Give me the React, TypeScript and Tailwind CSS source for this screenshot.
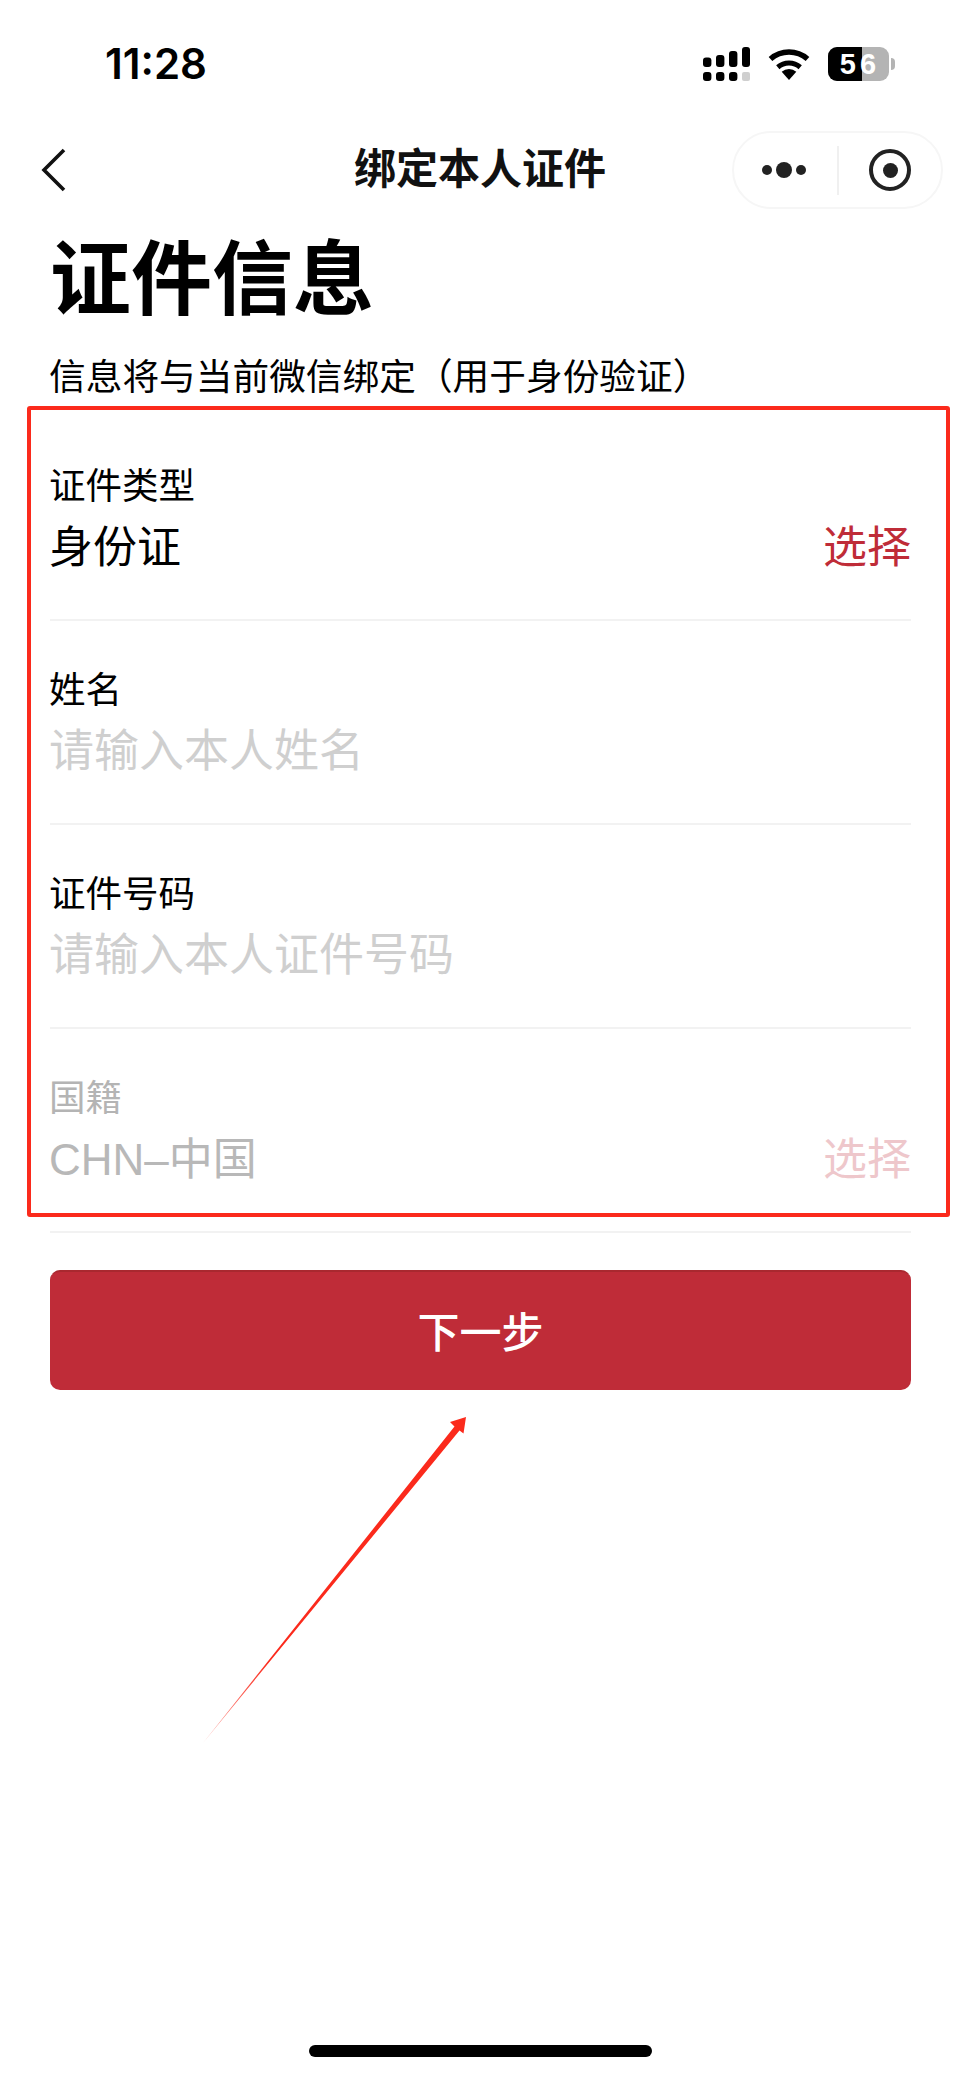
import React from "react";

const FONT = "font-['Liberation_Sans','Noto_Sans_CJK_SC',sans-serif]";

const SignalIcon = () => (
  <svg width="48" height="35" viewBox="0 0 48 35" fill="#000">
    <rect x="1" y="10.5" width="8.4" height="9.5" rx="3" />
    <rect x="14" y="8" width="8.4" height="12" rx="3" />
    <rect x="27" y="4" width="8.4" height="16" rx="3" />
    <rect x="40" y="0" width="8" height="20" rx="3" />
    <rect x="1" y="25" width="8.4" height="9" rx="3" />
    <rect x="14" y="25" width="8.4" height="9" rx="3" />
    <rect x="27" y="25" width="8.4" height="9" rx="3" />
    <rect x="40" y="25" width="8" height="9" rx="2" fill="#cfcfcf" />
  </svg>
);

const WifiIcon = () => (
  <svg width="42" height="31" viewBox="0 0 42 31" fill="none" stroke="#000">
    <path d="M2.5 10A28 28 0 0 1 39.5 10" strokeWidth="5.5" />
    <path d="M9.8 18.25A17 17 0 0 1 32.2 18.25" strokeWidth="5" />
    <path d="M21 31L13.7 22.7A11 11 0 0 1 28.3 22.7Z" fill="#000" stroke="none" />
  </svg>
);

const Battery = () => (
  <div className="flex items-center">
    <div className="relative flex h-[34px] w-[61px] overflow-hidden rounded-[9px] bg-[#b4b4b4]">
      <div className="h-full w-[34px] bg-black" />
      <span className="absolute inset-0 flex items-center justify-center pl-[3px] text-[29px] font-bold leading-none tracking-[4px] text-white">
        56
      </span>
    </div>
    <div className="ml-[2px] h-[12px] w-[4px] rounded-r-full bg-[#b4b4b4]" />
  </div>
);

const Row = ({
  label,
  value,
  action,
  placeholder,
  muted,
}: {
  label: string;
  value?: string;
  action?: string;
  placeholder?: string;
  muted?: boolean;
}) => (
  <div className="h-[204px] border-b-2 border-[#f2f2f2] pt-[45px]">
    <div className={`-ml-[1px] text-[36.5px] leading-[50px] ${muted ? "text-[#b4b4b4]" : "text-black"}`}>{label}</div>
    <div className="mt-[6px] flex items-center justify-between text-[44px] leading-[60px]">
      {placeholder ? (
        <span className="-ml-[1px] text-[45px] text-[#cfcfcf]">{placeholder}</span>
      ) : (
        <span className={`-ml-[1px] ${muted ? "text-[#b8b8b8]" : "text-black"}`}>{value}</span>
      )}
      {action && <span className={muted ? "text-[#eec7cb]" : "text-[#bf2c38]"}>{action}</span>}
    </div>
  </div>
);

export default function App() {
  return (
    <div className={`relative flex h-[2077px] w-[960px] flex-col overflow-hidden bg-white ${FONT}`}>
      {/* status bar */}
      <div className="flex h-[131px] items-center justify-between pb-[3px] pl-[105px] pr-[65px]">
        <span className="font-['Inter'] text-[42px] font-semibold leading-none text-black">11:28</span>
        <div className="flex items-center gap-[18px]">
          <SignalIcon />
          <WifiIcon />
          <Battery />
        </div>
      </div>

      {/* nav bar */}
      <div className="relative flex h-[78px] items-center justify-center">
        <svg className="absolute left-[40px] top-[17px]" width="28" height="44" viewBox="0 0 28 44" fill="none">
          <path d="M24 2L4 22L24 42" stroke="#111" strokeWidth="3.6" />
        </svg>
        <span className="text-[42px] font-semibold leading-none text-[#111]">绑定本人证件</span>
        <div className="absolute right-[17px] top-0 flex h-[78px] w-[211px] items-center rounded-full border-2 border-[#f6f6f6] bg-white">
          <div className="flex w-[103px] items-center justify-center gap-[4px] pr-[3px]">
            <span className="h-[10px] w-[10px] rounded-full bg-[#222]" />
            <span className="h-[16px] w-[16px] rounded-full bg-[#222]" />
            <span className="h-[10px] w-[10px] rounded-full bg-[#222]" />
          </div>
          <div className="h-[49px] w-[2px] bg-[#f0f0f0]" />
          <div className="flex flex-1 items-center justify-center">
            <div className="flex h-[42px] w-[42px] items-center justify-center rounded-full border-[4px] border-[#222]">
              <span className="h-[15px] w-[15px] rounded-full bg-[#222]" />
            </div>
          </div>
        </div>
      </div>

      {/* form */}
      <div className="flex flex-1 flex-col pl-[50px] pr-[49px]">
        <h1 className="mt-[25px] text-[81px] font-bold leading-[92px] text-black">证件信息</h1>
        <p className="-ml-[1px] mt-[27px] text-[36.7px] leading-[50px] text-black">信息将与当前微信绑定（用于身份验证）</p>
        <div className="mt-[14px]">
          <Row label="证件类型" value="身份证" action="选择" />
          <Row label="姓名" placeholder="请输入本人姓名" />
          <Row label="证件号码" placeholder="请输入本人证件号码" />
          <Row label="国籍" value="CHN–中国" action="选择" muted />
        </div>
        <button className="mt-[37px] h-[120px] w-full rounded-[10px] border-t-2 border-[#a9282f] bg-[#bf2c38] pt-[4px] text-[42px] font-medium text-white">
          下一步
        </button>
      </div>

      {/* home indicator */}
      <div className="mb-[20px] flex justify-center">
        <div className="h-[12px] w-[343px] rounded-full bg-black" />
      </div>

      {/* annotation: red box over the fields */}
      <div className="absolute left-[27px] top-[406px] h-[811px] w-[923px] rounded-[3px] border-[4px] border-[#fb2a1c]" />

      {/* annotation: arrow pointing at the button */}
      <svg className="absolute left-0 top-0" width="960" height="2077" viewBox="0 0 960 2077" fill="none">
        <defs>
          <linearGradient id="tail" gradientUnits="userSpaceOnUse" x1="203" y1="1743" x2="270" y2="1662">
            <stop offset="0" stopColor="#fb2a1c" stopOpacity="0.4" />
            <stop offset="1" stopColor="#fb2a1c" />
          </linearGradient>
        </defs>
        <path
          d="M203 1743L454.5 1426.5L450 1422L466 1417L463.5 1433.5L459.5 1430.5Z"
          fill="url(#tail)"
        />
      </svg>
    </div>
  );
}
